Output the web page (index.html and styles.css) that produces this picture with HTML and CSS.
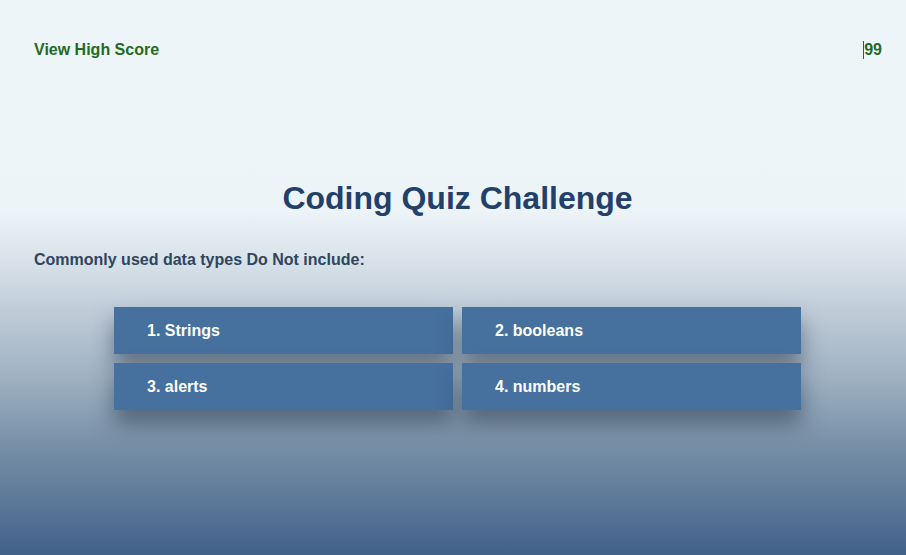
FILE: index.html
```html
<!DOCTYPE html>
<html>
<head>
<meta charset="utf-8">
<link rel="stylesheet" href="styles.css">
</head>
<body>
<header class="top">
  <a class="high" href="#">View High Score</a>
  <span class="timer">99</span>
</header>
<main class="quiz">
  <h1 class="title">Coding Quiz Challenge</h1>
  <p class="question">Commonly used data types Do Not include:</p>
  <div class="answers">
    <button class="ans">1. Strings</button>
    <button class="ans">2. booleans</button>
    <button class="ans">3. alerts</button>
    <button class="ans">4. numbers</button>
  </div>
</main>
</body>
</html>
```
FILE: styles.css
```css
html, body { margin: 0; padding: 0; height: 100%; }
body {
  font-family: "Liberation Sans", Arial, sans-serif;
  background: linear-gradient(to bottom, #eef5f9 0%, #edf4f8 38%, #dbe4eb 46%, #c5d1dc 54%, #9fb1c2 68%, #7890a7 80%, #5a7797 91%, #41618a 100%);
  min-height: 555px;
}
.top {
  display: flex;
  justify-content: space-between;
  align-items: center;
  padding: 40px 25px 0 34px;
  height: 20px;
}
.high {
  color: #236b23;
  font-weight: bold;
  font-size: 16px;
  text-decoration: none;
}
.timer {
  color: #236b23;
  font-weight: bold;
  font-size: 16px;
  border-left: 1px solid #236b23;
  line-height: 18px;
  margin-right: -1px;
}
.quiz { padding: 0 25px 0 34px; }
.title {
  margin: 120px 0 0;
  text-align: center;
  font-size: 32px;
  color: #22406a;
  line-height: 37px;
}
.question {
  margin: 34px 0 0;
  font-size: 16px;
  font-weight: bold;
  color: #2f4560;
}
.answers {
  margin: 38px auto 0;
  width: 687px;
  display: grid;
  grid-template-columns: 1fr 1fr;
  gap: 9px;
}
.ans {
  height: 47px;
  border: 0;
  background: #46709e;
  color: #fff;
  font-family: "Liberation Sans", Arial, sans-serif;
  font-weight: bold;
  font-size: 16px;
  text-align: left;
  padding: 0 0 0 33px;
  box-shadow: 0 14px 22px rgba(30, 45, 65, 0.5);
}
```
